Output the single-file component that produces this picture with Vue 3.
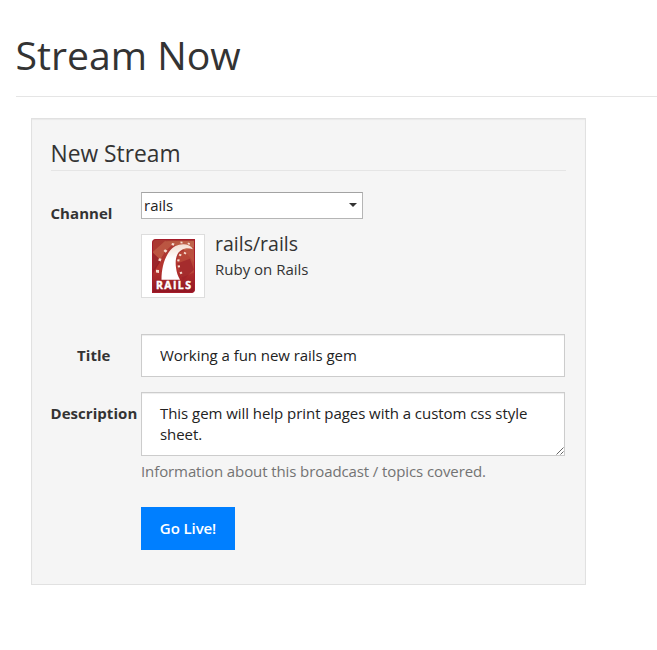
<script setup>
import { ref } from 'vue'

const channel = ref('rails')
const title = ref('Working a fun new rails gem')
const description = ref('This gem will help print pages with a custom css style sheet.')
</script>

<template>
  <main class="page">
    <header class="page-header">
      <h1>Stream Now</h1>
    </header>
    <form class="well" @submit.prevent>
      <h2 class="legend">New Stream</h2>

      <div class="row channel-row">
        <label class="label" for="channel">Channel</label>
        <div class="controls">
          <div class="select-wrap">
            <select id="channel" v-model="channel">
              <option value="rails">rails</option>
            </select>
            <svg class="caret" viewBox="0 0 8 4" width="8" height="4"><path d="M0 0h8L4 4z" fill="#333" /></svg>
          </div>
          <div class="media">
            <div class="thumb">
              <svg viewBox="0 0 43 55" width="43" height="54" preserveAspectRatio="none">
                <defs>
                  <linearGradient id="bg" x1="0" y1="0" x2="0" y2="1">
                    <stop offset="0" stop-color="#a83a32" />
                    <stop offset="0.55" stop-color="#b5342f" />
                    <stop offset="1" stop-color="#8f1422" />
                  </linearGradient>
                  <linearGradient id="glow" x1="0" y1="0" x2="1" y2="1">
                    <stop offset="0" stop-color="#b9583f" />
                    <stop offset="1" stop-color="#cf8460" />
                  </linearGradient>
                  <linearGradient id="track" x1="0" y1="0" x2="0" y2="1">
                    <stop offset="0" stop-color="#f3dccf" />
                    <stop offset="0.4" stop-color="#fff" />
                  </linearGradient>
                </defs>
                <path d="M4 0H43V51Q43 55 39 55H0V4Q0 0 4 0Z" fill="url(#bg)" />
                <path d="M1 13L13 2L22 4L13 13L4 28L1 31Z" fill="#c3654b" opacity=".65" />
                <path d="M14 2H42V24L33 12Z" fill="url(#glow)" opacity=".8" />
                <path d="M27 14L42 8V34L30 39L25 28Z" fill="#b94a3b" opacity=".8" />
                <path d="M25 25L38 20L42 31L31 42Z" fill="#9c2229" opacity=".7" />
                <path d="M1 14L9 22L1 35Z" fill="#8f1724" opacity=".75" />
                <path d="M4 .5H42.5V51Q42.5 54.500 39 54.500H.5V4Q.5 .5 4 .5Z" fill="none" stroke="#a51c2b" />
                <path d="M9.500 41.500C9.500 27 14 13 23 7.500C30 4 38 5 41 10.500C37 9 33 9 30 11C24 14 23 22 24 29C24.500 34 26 38 28 41.500Z" fill="url(#track)" />
                <g fill="#f6ddd0">
                  <path d="M4 31.300l3 .3v3l-3-.4zM7 19.500l2.500.7-.8 2.600-2.500-.8zM13 10.500l2.500 1.500-1.800 2-2.200-1.700zM20 4l2.500.7-.8 2.200-2.300-.7zM28.500 2.500l2 .4v1.800l-2-.4zM36 3.500l2 .8-.5 1.700-2-.8z" />
                  <path d="M32.500 13l2 1.300-1 1.500-2-1.300zM27.500 15l2.200.8-.8 1.800-2.200-.8zM25.500 20.500l2.200.4-.4 2.100-2.200-.4zM25.700 27l2.100-.2.3 2.100-2.100.2zM27.500 34l1.900-.8 1.100 1.800-1.900.9z" />
                </g>
                <text class="logo-word" x="4" y="51" textLength="35" lengthAdjust="spacing">RAILS</text>
              </svg>
            </div>
            <div class="media-body">
              <h3>rails/rails</h3>
              <p>Ruby on Rails</p>
            </div>
          </div>
        </div>
      </div>

      <div class="row title-row">
        <label class="label centered" for="title">Title</label>
        <div class="controls">
          <input id="title" v-model="title" class="field" type="text">
        </div>
      </div>

      <div class="row">
        <label class="label" for="description">Description</label>
        <div class="controls">
          <div class="area-wrap">
            <textarea id="description" v-model="description" class="field area" spellcheck="false"></textarea>
            <svg class="grip" viewBox="0 0 8 8" width="8" height="8"><path d="M.5 7.500l7-7M4.500 7.500l3-3" stroke="#555" stroke-width=".9" /></svg>
          </div>
          <p class="help">Information about this broadcast / topics covered.</p>
          <button class="submit" type="submit">Go Live!</button>
        </div>
      </div>
    </form>
  </main>
</template>

<style>
body {
  background: #fff;
  overflow: hidden;
}
</style>

<style scoped>
* {
  box-sizing: border-box;
}
.page {
  height: 650px;
  padding: 32px 0 0 16px;
  overflow: hidden;
  font-family: "Open Sans", sans-serif;
  font-size: 15px;
  line-height: 21px;
  color: #333;
  white-space: nowrap;
}
h1, h2, h3, p {
  margin: 0;
  font-weight: 400;
}
.page-header {
  height: 65px;
  border-bottom: 1px solid #e5e5e5;
}
h1 {
  margin-left: -0.5px;
  font-size: 39.2px;
  line-height: 46px;
}
.well {
  width: 555px;
  height: 467px;
  margin: 21px 0 0 15px;
  padding: 19px;
  background: #f5f5f5;
  border: 1px solid #e1e1e1;
  box-shadow: inset 0 1px 1px rgba(0, 0, 0, 0.05);
}
.legend {
  height: 33px;
  border-bottom: 1px solid #e5e5e5;
  font-size: 22.8px;
  line-height: 31px;
  text-indent: -0.5px;
}
.row {
  display: grid;
  grid-template-columns: 90px 424px;
}
.channel-row {
  height: 142px;
  margin-top: 21px;
}
.title-row {
  height: 58px;
}
.label {
  padding-top: 11px;
  font-weight: 700;
  letter-spacing: 0.05px;
  text-indent: -0.5px;
}
.centered {
  width: 86px;
  text-align: center;
}
.select-wrap {
  position: relative;
  width: 222px;
  height: 27px;
}
select {
  display: block;
  width: 222px;
  height: 27px;
  padding: 0 2px;
  appearance: none;
  background: #fff;
  border: 1px solid #b5b5b5;
  border-top-color: #a3a3a3;
  border-radius: 0;
  font: inherit;
  color: #222;
}
.caret {
  position: absolute;
  top: 11px;
  right: 6px;
}
.media {
  display: flex;
  gap: 10px;
  margin-top: 15px;
}
.thumb {
  display: flex;
  justify-content: center;
  width: 64px;
  height: 64px;
  padding-top: 4px;
  background: #fff;
  border: 1px solid #ddd;
}
.logo-word {
  font-family: "Open Sans", sans-serif;
  font-size: 10.5px;
  font-weight: 700;
  fill: #fff;
  stroke: #fff;
  stroke-width: 0.4px;
}
h3 {
  font-size: 19.5px;
  line-height: 19px;
}
.media-body p {
  margin-top: 6px;
}
.field {
  display: block;
  width: 424px;
  height: 43px;
  padding: 9px 18px 11px;
  background: #fff;
  border: 1px solid #ccc;
  border-radius: 0;
  box-shadow: inset 0 1px 1px rgba(0, 0, 0, 0.075);
  font: inherit;
  letter-spacing: -0.05px;
  color: #222;
  outline: 0;
}
.area-wrap {
  position: relative;
}
.area {
  height: 64px;
  padding: 10px 18px;
  resize: none;
  overflow: hidden;
  white-space: pre-wrap;
}
.grip {
  position: absolute;
  right: 1px;
  bottom: 1px;
}
.help {
  margin-top: 5px;
  letter-spacing: -0.1px;
  color: #737373;
}
.submit {
  display: block;
  width: 94px;
  height: 43px;
  margin-top: 25px;
  padding: 0;
  background: #007fff;
  border: 0;
  font: inherit;
  font-weight: 600;
  letter-spacing: -0.1px;
  color: #fff;
}
</style>
